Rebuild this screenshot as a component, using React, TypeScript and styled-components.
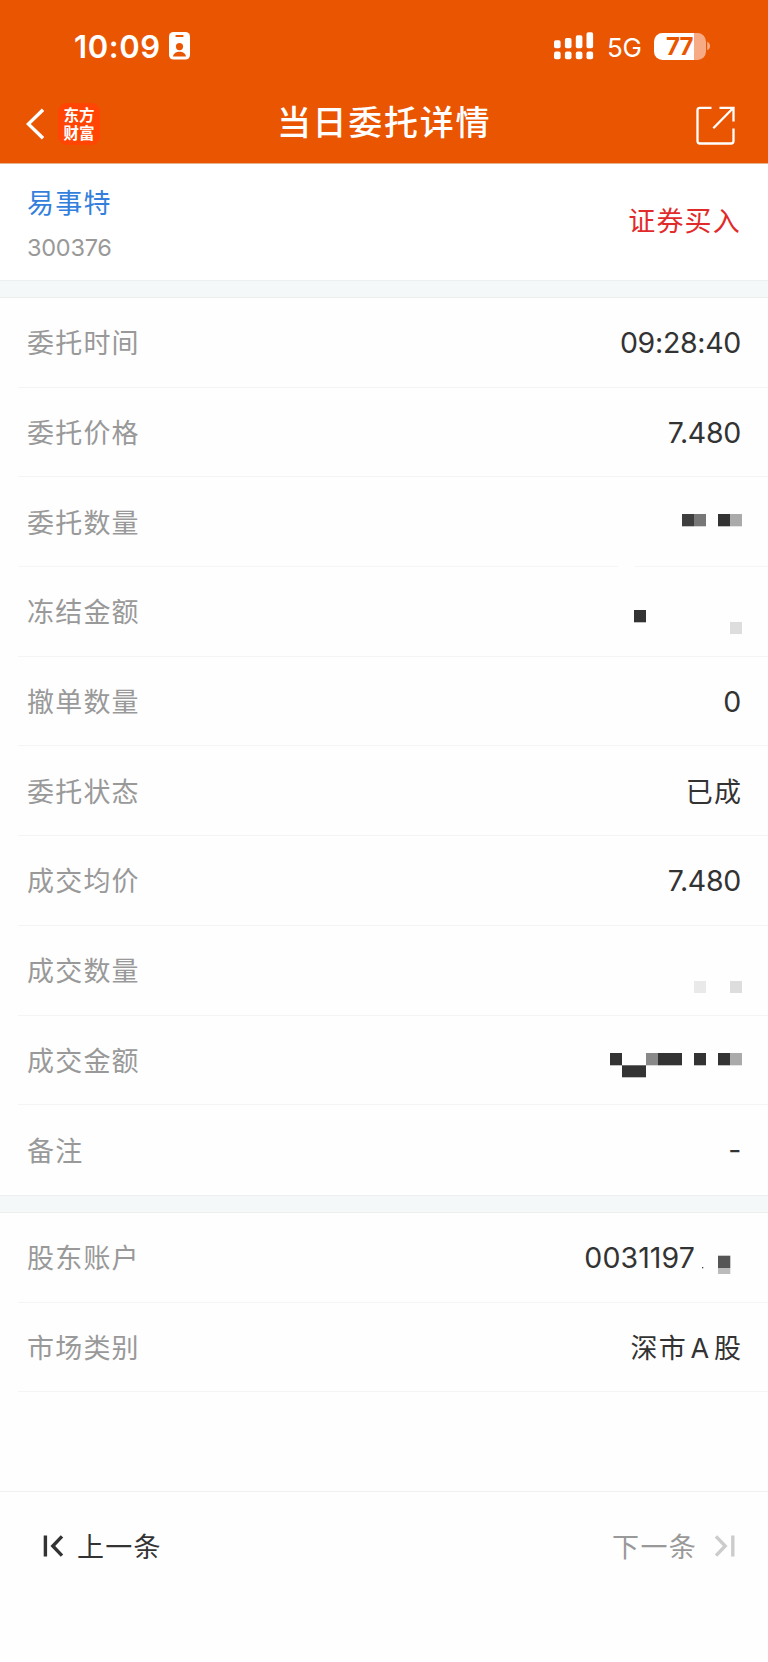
import React from "react";
import styled, { createGlobalStyle } from "styled-components";

const ORANGE = "#ea5502";
const INK = "#333333";

const GlobalStyle = createGlobalStyle`
  * { box-sizing: border-box; }
  body {
    margin: 0;
    background: #fefefe;
    font-family: Inter, "Noto Sans CJK SC", sans-serif;
    color: ${INK};
  }
`;

const Screen = styled.div`
  width: 768px;
  height: 1662px;
  display: flex;
  flex-direction: column;
  overflow: hidden;
`;

const Header = styled.header`
  height: 164px;
  flex: none;
  display: flex;
  flex-direction: column;
  background: ${ORANGE};
  border-bottom: 1px solid #e5b28c;
  color: #ffffff;
`;

const StatusBar = styled.div`
  height: 84px;
  padding: 8px 57px 0 74px;
  display: flex;
  align-items: center;
`;

const Clock = styled.span`
  width: 95px;
  font-size: 31px;
  font-weight: 600;
  letter-spacing: 0.6px;
  white-space: nowrap;
`;

const StatusRight = styled.div`
  margin-left: auto;
  display: flex;
  align-items: center;
`;

const Network = styled.span`
  width: 60px;
  padding-left: 13px;
  font-size: 26px;
  letter-spacing: -0.4px;
  line-height: 30px;
  margin-top: 3px;
  white-space: nowrap;
`;

const BatteryWrap = styled.div`
  width: 57px;
  height: 28px;
  display: flex;
  align-items: center;
`;

const BatteryBody = styled.div`
  width: 52px;
  height: 27px;
  border-radius: 8.5px;
  background: linear-gradient(90deg, #ffffff 39.5px, #f6ab84 39.5px);
  color: ${ORANGE};
  font-size: 24px;
  font-weight: 700;
  line-height: 27px;
  letter-spacing: -1px;
  padding-left: 12px;
`;

const NavBar = styled.div`
  flex: 1;
  display: grid;
  grid-template-columns: 200px 1fr 200px;
  align-items: center;
`;

const NavLeft = styled.div`
  display: flex;
  align-items: center;
  padding-left: 26px;
`;

const Logo = styled.div`
  width: 42px;
  height: 42px;
  margin-left: 14px;
  border-radius: 9px;
  background: #ff4403;
  font-family: "Noto Sans CJK SC", sans-serif;
  font-size: 15.5px;
  font-weight: 700;
  line-height: 18px;
  padding-top: 2px;
  text-align: center;
`;

const Title = styled.h1`
  margin: 0 0 5px;
  font-family: "Noto Sans CJK SC", sans-serif;
  font-size: 34px;
  font-weight: 500;
  letter-spacing: 1.7px;
  line-height: 50px;
  text-align: center;
  white-space: nowrap;
`;

const NavRight = styled.div`
  display: flex;
  justify-content: flex-end;
  padding: 3px 33px 0 0;
`;

const Summary = styled.section`
  height: 116px;
  flex: none;
  padding: 20px 27px 0 27px;
  display: flex;
  justify-content: space-between;
  background: #ffffff;
`;

const StockName = styled.div`
  font-size: 27px;
  line-height: 40px;
  letter-spacing: 1.3px;
  color: #347fdc;
`;

const StockCode = styled.div`
  margin-top: 8px;
  font-size: 23.5px;
  line-height: 32px;
  letter-spacing: -0.25px;
  color: #999999;
`;

const Side = styled.div`
  margin-top: 18px;
  font-size: 27px;
  line-height: 40px;
  letter-spacing: 1.2px;
  color: #e12b2b;
`;

const Band = styled.div`
  height: 18px;
  flex: none;
  background: #f4f8f9;
  border-top: 1px solid #eeeff0;
  border-bottom: 1px solid #eceeee;
`;

const List = styled.section`
  flex: none;
`;

const RowBox = styled.div<{ $last?: boolean; $gap?: boolean }>`
  height: 89.7px;
  margin-left: 18px;
  padding: 0 27px 0 9px;
  display: flex;
  justify-content: space-between;
  align-items: center;
  background: ${(p) =>
    p.$last
      ? "none"
      : p.$gap
        ? "linear-gradient(90deg, #f6f6f6 600px, transparent 600px, transparent 617px, #f6f6f6 617px) bottom / 100% 1px no-repeat"
        : "linear-gradient(#f4f4f4, #f4f4f4) bottom / 100% 1px no-repeat"};
`;

const Label = styled.span`
  margin-bottom: 1px;
  font-family: "Noto Sans CJK SC", sans-serif;
  font-size: 27px;
  line-height: 40px;
  letter-spacing: 1.2px;
  color: #999999;
`;

const Value = styled.span<{ $cjk?: boolean; $wide?: boolean }>`
  font-size: ${(p) => (p.$cjk ? 27 : 28.5)}px;
  line-height: 40px;
  letter-spacing: ${(p) => (p.$cjk ? 1.1 : p.$wide ? 0.1 : -0.3)}px;
  word-spacing: ${(p) => (p.$cjk ? -5 : 0)}px;
  margin-right: ${(p) => (p.$cjk ? -1 : 0)}px;
  padding-top: ${(p) => (p.$cjk ? 4 : 0.6)}px;
  white-space: pre;
`;

const Masked = styled.span`
  display: flex;
  align-items: center;
  height: 100%;
`;

const MosaicSvg = styled.svg`
  flex: none;
  align-self: flex-start;
  margin-right: -1px;
`;

const Footer = styled.footer`
  margin-top: auto;
  height: 171px;
  flex: none;
  padding: 34px 33px 0 43px;
  display: flex;
  justify-content: space-between;
  align-items: flex-start;
  border-top: 1px solid #f0f0f0;
`;

const Pager = styled.button<{ $muted?: boolean }>`
  display: flex;
  align-items: center;
  gap: ${(p) => (p.$muted ? 17 : 13)}px;
  padding: 0;
  border: 0;
  background: none;
  font-family: "Noto Sans CJK SC", sans-serif;
  font-size: 27px;
  line-height: 40px;
  letter-spacing: 1.3px;
  color: ${(p) => (p.$muted ? "#999999" : INK)};
`;

// x, y, width, height, fill within a strip 132px wide and one row high
type Cell = [number, number, number, number, string];

const Mosaic = ({ cells, width = 132 }: { cells: Cell[]; width?: number }) => (
  <MosaicSvg width={width} height="88" viewBox={`${132 - width} 0 ${width} 88`}>
    {cells.map(([x, y, w, h, fill], i) => (
      <rect key={i} x={x} y={y} width={w} height={h} fill={fill} />
    ))}
  </MosaicSvg>
);

const orderRows: { label: string; value?: string; cjk?: boolean; cells?: Cell[]; gap?: boolean }[] = [
  { label: "委托时间", value: "09:28:40" },
  { label: "委托价格", value: "7.480" },
  {
    label: "委托数量",
    gap: true,
    cells: [
      [72, 37, 12, 12.3, "#3e3e3e"],
      [84, 37, 12, 12.3, "#777777"],
      [108, 37, 12, 12.3, "#333333"],
      [120, 37, 12, 12.3, "#aaaaaa"],
    ],
  },
  {
    label: "冻结金额",
    cells: [
      [24, 43, 12, 12.3, "#333333"],
      [120, 55, 12, 12, "#dddddd"],
    ],
  },
  { label: "撤单数量", value: "0" },
  { label: "委托状态", value: "已成", cjk: true },
  { label: "成交均价", value: "7.480" },
  {
    label: "成交数量",
    cells: [
      [84, 55, 12, 12, "#e9e9e9"],
      [120, 55, 12, 12, "#dddddd"],
    ],
  },
  {
    label: "成交金额",
    cells: [
      [0, 37, 12, 12.3, "#333333"],
      [12, 49.3, 24, 12, "#333333"],
      [36, 37, 12, 12.3, "#888888"],
      [48, 37, 24, 12.3, "#333333"],
      [84, 37, 12, 12.3, "#333333"],
      [108, 37, 12, 12.3, "#333333"],
      [120, 37, 12, 12.3, "#aaaaaa"],
    ],
  },
  { label: "备注", value: "-" },
];

const App = () => (
  <>
    <GlobalStyle />
    <Screen>
      <Header>
        <StatusBar>
          <Clock>10:09</Clock>
          <svg width="21" height="28" viewBox="0 0 21 28">
            <rect width="21" height="27.5" rx="4.5" fill="#fff" />
            <rect x="6.3" y="3" width="8.4" height="2" rx="1" fill={ORANGE} />
            <circle cx="10.5" cy="14.6" r="3.6" fill={ORANGE} />
            <path d="M4 24.6C4.4 21.5 7 19.8 10.5 19.8S16.6 21.5 17 24.6Z" fill={ORANGE} />
          </svg>
          <StatusRight>
            <svg width="40" height="28" viewBox="0 0 40 28" fill="#fff">
              <rect x="0" y="8.3" width="6.6" height="7.9" rx="1.8" />
              <rect x="10.9" y="6" width="6.6" height="10.2" rx="1.8" />
              <rect x="21.8" y="3.2" width="6.6" height="13" rx="1.8" />
              <rect x="32.5" y="0.2" width="6.6" height="16" rx="1.8" />
              <rect x="0" y="19.6" width="6.6" height="7.6" rx="2" />
              <rect x="10.9" y="19.6" width="6.6" height="7.6" rx="2" />
              <rect x="21.8" y="19.6" width="6.6" height="7.6" rx="2" />
              <rect x="32.5" y="19.6" width="6.6" height="7.6" rx="2" />
            </svg>
            <Network>5G</Network>
            <BatteryWrap>
              <BatteryBody>77</BatteryBody>
              <svg width="5" height="10" viewBox="0 0 5 10">
                <path d="M1.2 0.8C5 2.4 5 7.6 1.2 9.2Z" fill="#f6ab84" />
              </svg>
            </BatteryWrap>
          </StatusRight>
        </StatusBar>
        <NavBar>
          <NavLeft>
            <svg width="18" height="32" viewBox="0 0 18 32" fill="none" stroke="#fff" strokeWidth="3.3">
              <path d="M17 1.8L2.3 16L17 30.2" />
            </svg>
            <Logo>
              东方
              <br />
              财富
            </Logo>
          </NavLeft>
          <Title>当日委托详情</Title>
          <NavRight>
            <svg width="39" height="39" viewBox="0 0 39 39" fill="none" stroke="#fff" strokeWidth="2.3">
              <path d="M15.5 1.8H4Q1.5 1.8 1.5 4.3V35Q1.5 37.5 4 37.5H35Q37.5 37.5 37.5 35V22.5" />
              <path d="M23.5 1.8H37.5V15.5M37.2 2L17.3 22.3" />
            </svg>
          </NavRight>
        </NavBar>
      </Header>

      <Summary>
        <div>
          <StockName>易事特</StockName>
          <StockCode>300376</StockCode>
        </div>
        <Side>证券买入</Side>
      </Summary>
      <Band />

      <List>
        {orderRows.map((r, i) => (
          <RowBox key={r.label} $gap={r.gap} $last={i === orderRows.length - 1}>
            <Label>{r.label}</Label>
            {r.cells ? <Mosaic cells={r.cells} /> : <Value $cjk={r.cjk}>{r.value}</Value>}
          </RowBox>
        ))}
      </List>
      <Band />
      <List>
        <RowBox>
          <Label>股东账户</Label>
          <Masked>
            <Value $wide>0031197</Value>
            <Mosaic
              width={47}
              cells={[
                [92, 54, 1.3, 1.3, "#444444"],
                [108, 42.7, 12.3, 12.3, "#555555"],
                [108, 55, 12.3, 6, "#bbbbbb"],
              ]}
            />
          </Masked>
        </RowBox>
        <RowBox>
          <Label>市场类别</Label>
          <Value $cjk>深市 A 股</Value>
        </RowBox>
      </List>

      <Footer>
        <Pager>
          <svg width="21" height="22" viewBox="0 0 21 22" fill="none" stroke={INK} strokeWidth="3.4">
            <path d="M2.4 0.5V21.5M19 1.4L9.8 11L19 20.6" />
          </svg>
          上一条
        </Pager>
        <Pager $muted>
          下一条
          <svg width="21" height="22" viewBox="0 0 21 22" fill="none" stroke="#cccccc" strokeWidth="3.4">
            <path d="M18.8 0.5V21.5M2 1.4L11.2 11L2 20.6" />
          </svg>
        </Pager>
      </Footer>
    </Screen>
  </>
);

export default App;
